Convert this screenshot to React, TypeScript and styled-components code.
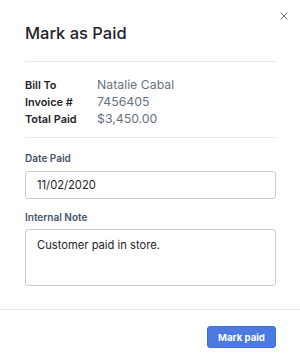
import React from "react";
import styled, { createGlobalStyle } from "styled-components";

const Global = createGlobalStyle`
  html, body {
    margin: 0;
    padding: 0;
    background: #ffffff;
  }
  body {
    font-family: "Inter", "Liberation Sans", sans-serif;
    -webkit-font-smoothing: antialiased;
  }
`;

const Modal = styled.div`
  width: 300px;
  height: 363px;
  background: #ffffff;
  position: relative;
  display: flex;
  flex-direction: column;
  box-sizing: border-box;
`;

const Close = styled.button`
  position: absolute;
  top: 11px;
  right: 11px;
  width: 10px;
  height: 10px;
  padding: 0;
  border: none;
  background: none;
  cursor: pointer;
  display: flex;
  align-items: center;
  justify-content: center;
`;

const Body = styled.div`
  padding: 0 24px 0 25px;
  display: flex;
  flex-direction: column;
`;

const Title = styled.h1`
  margin: 21px 0 0;
  font-size: 16.5px;
  line-height: 24px;
  font-weight: 500;
  color: #1f2329;
`;

const Divider = styled.hr<{ $top: number }>`
  margin: ${(p) => p.$top}px 0 0;
  border: none;
  border-top: 1px solid #e8eaed;
`;

const Details = styled.div`
  margin-top: 15px;
  display: grid;
  grid-template-columns: 72px 1fr;
  row-gap: 1px;
`;

const Key = styled.div`
  font-size: 10.9px;
  line-height: 16px;
  font-weight: 600;
  color: #1f2329;
`;

const Value = styled.div`
  font-size: 12.3px;
  line-height: 16px;
  color: #69727f;
`;

const Label = styled.label<{ $top: number }>`
  display: block;
  margin-top: ${(p) => p.$top}px;
  font-size: 10px;
  line-height: 14px;
  font-weight: 600;
  color: #44546a;
`;

const Input = styled.input`
  margin-top: 6px;
  box-sizing: border-box;
  width: 100%;
  height: 28px;
  padding: 0 11px;
  border: 1px solid #c9cdd2;
  border-radius: 3px;
  font-family: inherit;
  font-size: 11.2px;
  color: #1f2329;
  outline: none;
`;

const Note = styled.textarea`
  margin-top: 5px;
  box-sizing: border-box;
  width: 100%;
  height: 57px;
  padding: 7px 11px;
  border: 1px solid #c9cdd2;
  border-radius: 3px;
  font-family: inherit;
  font-size: 11.2px;
  line-height: 16px;
  color: #1f2329;
  resize: none;
  outline: none;
  display: block;
`;

const Footer = styled.div`
  margin-top: 23px;
  border-top: 1px solid #e8eaed;
  display: flex;
  justify-content: flex-end;
  padding: 16px 24px 0;
`;

const Primary = styled.button`
  width: 69px;
  height: 22px;
  border: 1px solid #3f6fd8;
  border-radius: 3px;
  background: #4b7be2;
  color: #ffffff;
  font-family: inherit;
  font-size: 9.6px;
  font-weight: 700;
  padding: 0;
  cursor: pointer;
`;

const details = [
  ["Bill To", "Natalie Cabal"],
  ["Invoice #", "7456405"],
  ["Total Paid", "$3,450.00"],
];

export default function App() {
  return (
    <>
      <Global />
      <Modal>
        <Close aria-label="Close">
          <svg width="8" height="8" viewBox="0 0 8 8">
            <path d="M0.5 0.5L7.5 7.5M7.5 0.5L0.5 7.5" stroke="#6f7a88" strokeWidth="1" />
          </svg>
        </Close>
        <Body>
          <Title>Mark as Paid</Title>
          <Divider $top={16} />
          <Details>
            {details.map(([k, v]) => (
              <React.Fragment key={k}>
                <Key>{k}</Key>
                <Value>{v}</Value>
              </React.Fragment>
            ))}
          </Details>
          <Divider $top={10} />
          <Label $top={13}>Date Paid</Label>
          <Input defaultValue="11/02/2020" />
          <Label $top={11}>Internal Note</Label>
          <Note defaultValue="Customer paid in store." />
        </Body>
        <Footer>
          <Primary>Mark paid</Primary>
        </Footer>
      </Modal>
    </>
  );
}
